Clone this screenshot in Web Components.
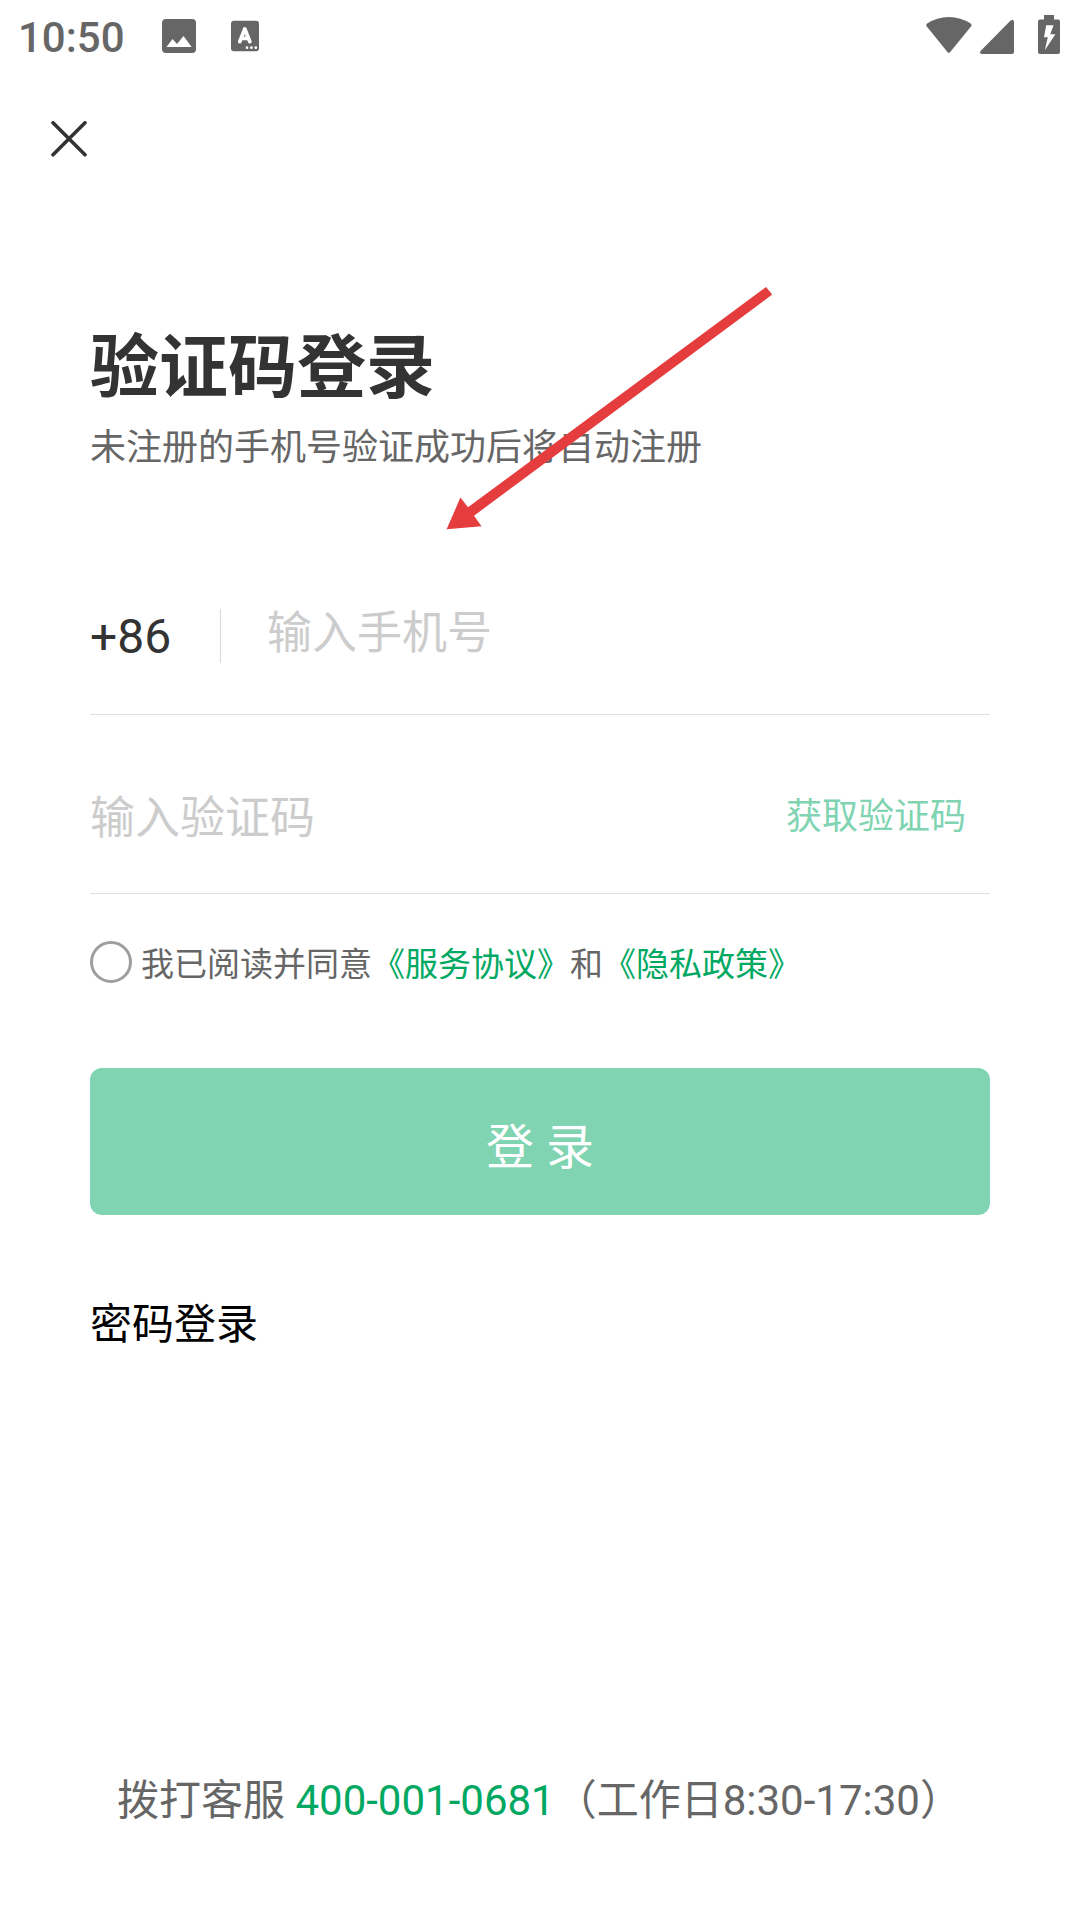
<!DOCTYPE html>
<html lang="zh-CN">
<head>
<meta charset="utf-8">
<title>验证码登录</title>
<style>
body {
  margin: 0;
  background-color: white;
  font-family: Roboto, "Noto Sans CJK SC", sans-serif;
}
</style>
</head>
<body>
<login-page>
  <status-bar slot="status">10:50</status-bar>
  <close-button slot="nav"></close-button>
  <page-title>
    验证码登录
    <span slot="hint">未注册的手机号验证成功后将自动注册</span>
  </page-title>
  <phone-field code="+86">输入手机号</phone-field>
  <code-field>输入验证码<span slot="action">获取验证码</span></code-field>
  <agreement-check>我已阅读并同意<agreement-link>《服务协议》</agreement-link>和<agreement-link>《隐私政策》</agreement-link></agreement-check>
  <login-button>登 录</login-button>
  <password-link>密码登录</password-link>
  <service-line slot="footer" phone="400-001-0681">拨打客服<span slot="hours">（工作日8:30-17:30）</span></service-line>
  <pointer-arrow slot="overlay"></pointer-arrow>
</login-page>

<script>
function define(name, html) {
  const template = document.createElement('template');
  template.innerHTML = html.trim();
  window.customElements.define(
    name,
    class extends HTMLElement {
      constructor() {
        super();
        const shadow = this.attachShadow({ mode: 'open' });
        shadow.append(template.content.cloneNode(true));
      }

      connectedCallback() {
        // fill [data-attr] nodes from the attributes of the host
        this.shadowRoot.querySelectorAll('[data-attr]').forEach((node) => {
          node.textContent = this.getAttribute(node.dataset.attr);
        });
      }
    }
  );
}

define('login-page', `
<style>
:host {
  display: flex;
  flex-direction: column;
  position: relative;
  box-sizing: border-box;
  width: 1080px;
  height: 1920px;
  overflow: hidden;
}
main {
  display: flex;
  flex-direction: column;
  padding: 115px 90px 0;
}
footer {
  margin-top: auto;
  padding-bottom: 89px;
}
</style>
<slot name="status"></slot>
<slot name="nav"></slot>
<main><slot></slot></main>
<footer><slot name="footer"></slot></footer>
<slot name="overlay"></slot>
`);

define('status-bar', `
<style>
:host {
  display: flex;
  align-items: flex-start;
  justify-content: space-between;
  box-sizing: border-box;
  height: 72px;
  padding: 0 18px;
  color: #666;
  font-size: 42px;
  font-weight: 500;
  line-height: 74px;
}
.left, .right {
  display: flex;
  align-items: center;
  height: 72px;
}
.time {
  width: 144px;
  padding-top: 3px;
}
svg {
  display: block;
  fill: #666;
}
</style>
<div class="left">
  <div class="time"><slot></slot></div>
  <svg width="34" height="72" viewBox="0 0 34 72">
    <rect x="0" y="19" width="34" height="34" rx="4"/>
    <path fill="white" d="M4.5 47 L10.5 39 L15 44 L21.5 36 L29.7 47 Z"/>
  </svg>
  <svg width="28" height="72" viewBox="0 0 28 72" style="margin-left: 35px">
    <rect x="0" y="20.7" width="28" height="30.6" rx="3"/>
    <path fill="none" stroke="white" stroke-width="3.8" stroke-linecap="round" stroke-linejoin="round" d="M8.8 41.6 L13.8 29 L18.8 41.6 M10.5 38.4 H17"/>
    <circle fill="white" cx="16" cy="47.7" r="1.4"/>
    <circle fill="white" cx="20.4" cy="47.7" r="1.4"/>
    <circle fill="white" cx="24.8" cy="47.7" r="1.4"/>
  </svg>
</div>
<div class="right">
  <svg width="46" height="72" viewBox="0 0 46 72">
    <path d="M0.8 26.5 Q-0.5 24.8 1.2 23.6 Q10.8 17 22.8 17 Q34.8 17 44.6 23.6 Q46.2 24.8 45 26.5 L24 52.2 Q22.8 53.5 21.6 52.2 Z"/>
  </svg>
  <svg width="34" height="72" viewBox="0 0 34 72" style="margin-left: 8px">
    <path d="M30.6 20.6 Q31.8 19.6 33 20 Q34 20.4 34 22 V52 Q34 54 32 54 H2 Q0 54 0 52.3 Q0 51.6 0.8 50.8 Z"/>
  </svg>
  <svg width="22" height="72" viewBox="0 0 22 72" style="margin: 0 2px 0 24px">
    <path d="M6 15 H16 V19.6 H20 Q22 19.6 22 21.6 V52 Q22 54 20 54 H2 Q0 54 0 52 V21.6 Q0 19.6 2 19.6 H6 Z"/>
    <path fill="white" d="M8.2 25.3 H15.6 L12.2 34.3 H17.4 L6.8 50.3 L9.8 37.3 H6 Z"/>
  </svg>
</div>
`);

define('close-button', `
<style>
:host {
  display: flex;
  align-items: center;
  height: 134px;
  padding-left: 51px;
}
</style>
<svg width="36" height="36" viewBox="0 0 36 36" fill="none" stroke="#333" stroke-width="3.6" stroke-linecap="round">
  <path d="M2 1.8 L34 33.8 M34 1.8 L2 33.8"/>
</svg>
`);

define('page-title', `
<style>
:host {
  display: block;
}
h1 {
  margin: 0;
  color: #333;
  font-size: 69px;
  font-weight: bold;
  line-height: 96px;
}
p {
  margin: 5px 0 0;
  color: #666;
  font-size: 36px;
  line-height: 52px;
}
</style>
<h1><slot></slot></h1>
<p><slot name="hint"></slot></p>
`);

define('phone-field', `
<style>
:host {
  display: flex;
  align-items: center;
  height: 157px;
  margin-top: 83px;
  border-bottom: 1px solid #e0e0e0;
  font-size: 45px;
  line-height: 60px;
}
.code {
  width: 130px;
  padding-top: 2px;
  color: #333;
  font-size: 48px;
}
.divider {
  width: 1px;
  height: 54px;
  background-color: #d8d8d8;
}
.placeholder {
  margin-left: 46px;
  padding-bottom: 3px;
  color: #ccc;
}
</style>
<div class="code" data-attr="code"></div>
<div class="divider"></div>
<div class="placeholder"><slot></slot></div>
`);

define('code-field', `
<style>
:host {
  display: flex;
  align-items: center;
  justify-content: space-between;
  box-sizing: border-box;
  height: 179px;
  padding: 30px 24px 0 0;
  border-bottom: 1px solid #e0e0e0;
  color: #ccc;
  font-size: 45px;
  line-height: 60px;
}
.action {
  padding-bottom: 4px;
  color: #80d4b2;
  font-size: 36px;
}
</style>
<div><slot></slot></div>
<div class="action"><slot name="action"></slot></div>
`);

define('agreement-check', `
<style>
:host {
  display: flex;
  align-items: center;
  height: 42px;
  margin-top: 47px;
  color: #666;
  font-size: 33px;
  line-height: 46px;
}
.radio {
  box-sizing: border-box;
  width: 42px;
  height: 42px;
  border: 3px solid #9e9e9e;
  border-radius: 50%;
}
.text {
  padding: 5px 0 0 9px;
  white-space: nowrap;
}
</style>
<div class="radio"></div>
<div class="text"><slot></slot></div>
`);

// sits inside running text, so no whitespace around the slot
define('agreement-link', `
<style>
:host {
  display: inline;
  color: #00a862;
}
</style><slot></slot>
`);

define('login-button', `
<style>
:host {
  display: flex;
  align-items: center;
  justify-content: center;
  box-sizing: border-box;
  height: 147px;
  margin-top: 85px;
  padding-top: 13px;
  border-radius: 12px;
  background-color: #80d4b2;
  color: white;
  font-size: 48px;
  line-height: 60px;
}
</style>
<slot></slot>
`);

define('password-link', `
<style>
:host {
  display: block;
  margin-top: 80px;
  color: black;
  font-size: 42px;
  line-height: 60px;
}
</style>
<slot></slot>
`);

define('service-line', `
<style>
:host {
  display: block;
  padding-left: 117px;
  color: #666;
  font-size: 42px;
  line-height: 60px;
  white-space: nowrap;
}
.phone {
  color: #00a862;
}
</style>
<slot></slot> <span class="phone" data-attr="phone"></span><slot name="hours"></slot>
`);

define('pointer-arrow', `
<style>
:host {
  display: block;
  position: absolute;
  left: 440px;
  top: 280px;
}
svg {
  display: block;
}
</style>
<svg width="340" height="256" viewBox="0 0 340 256">
  <path fill="#e53d3d" d="M326 7 L332.2 14.6 L34 235.7 L41.5 246.3 L6.6 249.3 L20.4 217.6 L28 227.3 Z"/>
</svg>
`);
</script>
</body>
</html>
